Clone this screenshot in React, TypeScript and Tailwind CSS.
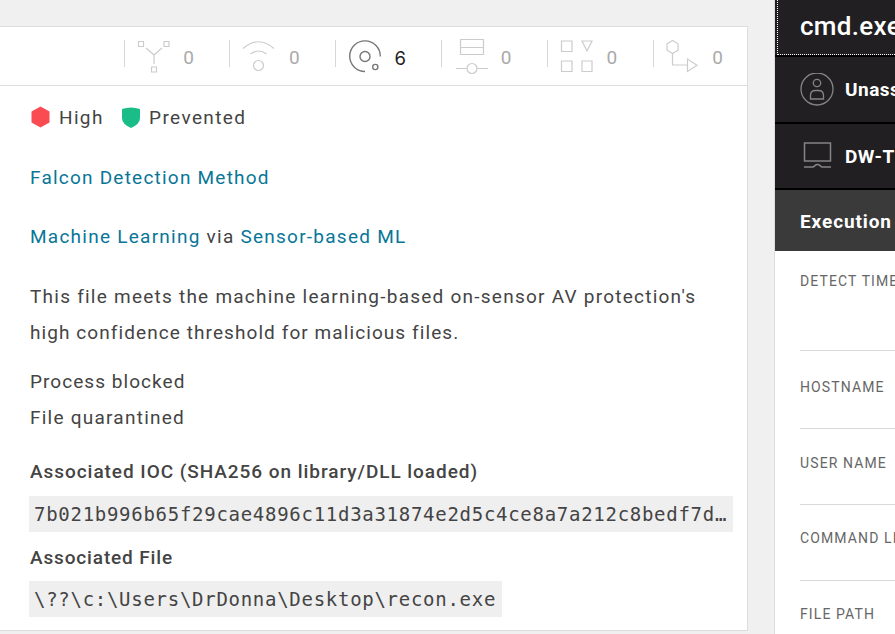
import type { ReactNode } from "react";

function Metric({ count, active, children }: { count: number; active?: boolean; children: ReactNode }) {
  return (
    <div className="flex w-[105.8px] shrink-0 items-start">
      <div className="mt-[13px] h-[27px] w-px bg-[#d6d6d6]" />
      <svg
        width="40"
        height="40"
        viewBox="0 0 40 40"
        fill="none"
        strokeWidth="1.2"
        className={`ml-[9px] mt-[9px] ${active ? "stroke-[#777777]" : "stroke-[#cccccc]"}`}
      >
        {children}
      </svg>
      <span
        className={`ml-[8px] mt-[17px] w-[14px] text-center leading-[28px] ${
          active ? "font-['Inter',sans-serif] text-[18.5px] text-[#222222]" : "text-[19px] text-[#aaaaaa]"
        }`}
      >
        {count}
      </span>
    </div>
  );
}

function Field({ label, className }: { label: string; className: string }) {
  return (
    <div className={`border-b border-[#d9d9d9] ${className}`}>
      <div className="whitespace-nowrap text-[14px] leading-[20px] tracking-[1.12px] text-[#666666]">{label}</div>
    </div>
  );
}

export default function App() {
  return (
    <div className="flex h-[634px] w-[895px] overflow-hidden bg-[#f0f0f0] font-['Roboto',sans-serif] text-[19px] text-[#444444]">
      <main className="mt-[26px] h-[605px] w-[748px] shrink-0 border-y border-r border-[#dddddd] bg-white">
        <div className="flex h-[59px] border-b border-[#dddddd] pl-[123.6px]">
          <Metric count={0}>
            <path d="M20 19V28M20 19L12 12M20 19L28 12" />
            <path d="M4.500 5.500h5v5h-5zM30 5.500h5v5h-5zM17.500 31h5v5h-5z" />
          </Metric>
          <Metric count={0}>
            <path d="M4 12.500Q19.500-1 35 12.500M11.500 18Q19.500 12 27.500 18" />
            <circle cx="19.500" cy="29.500" r="5" />
          </Metric>
          <Metric count={6} active>
            <path d="M20 35.500A15.300 15.300 0 1 1 35.300 20.500" strokeWidth="1.400" />
            <circle cx="20" cy="20.500" r="5" strokeWidth="1.400" />
            <circle cx="30.300" cy="31" r="2.600" strokeWidth="1.400" />
          </Metric>
          <Metric count={0}>
            <path d="M9.500 3.500h23v15h-23zM9.500 11.500h23M5 32.500h11M26 32.500h11" />
            <circle cx="21" cy="32.500" r="5" />
          </Metric>
          <Metric count={0}>
            <path d="M4.500 5h10.500v10.500h-10.500zM4.500 25h10.500v10.500h-10.500zM25 25h10v10.500h-10zM25 5h10l-5 10z" />
          </Metric>
          <Metric count={0}>
            <path d="M9.500 4.500l5.500 3.300v6.400l-5.500 3.300l-5.500-3.300v-6.400zM9.500 17.500v11.500h15M24.500 23v12.500l9.500-6.300z" />
          </Metric>
        </div>
        <div className="pl-[30px] leading-[36px]">
          <div className="mt-[13px] flex h-[36px] items-center">
            <svg width="21" height="22" viewBox="0 0 21 22" className="fill-[#fb4b52]">
              <path d="M10.500 .5l9 5v11l-9 5-9-5v-11z" />
            </svg>
            <span className="ml-[8px] w-[63px] pt-px tracking-[1.35px]">High</span>
            <svg width="18" height="21" viewBox="0 0 18 21" className="fill-[#1abd87]">
              <path d="M0 2Q9-1 18 2V11Q18 17 9 21Q0 17 0 11z" />
            </svg>
            <span className="ml-[9px] pt-px tracking-[1.4px]">Prevented</span>
          </div>
          <p className="mt-[25px] tracking-[1.22px] text-[#087697]">Falcon Detection Method</p>
          <p className="mt-[23px] tracking-[1.25px]">
            <span className="text-[#087697]">Machine Learning</span> via <span className="text-[#087697]">Sensor-based ML</span>
          </p>
          <p className="mt-[24px] whitespace-nowrap tracking-[1.08px]">
            <span className="tracking-[1.24px]">This file meets the machine learning-based on-sensor AV protection's</span>
            <br />
            high confidence threshold for malicious files.
          </p>
          <p className="mt-[13px] tracking-[1.05px]">
            Process blocked
            <br />
            <span className="tracking-[1.24px]">File quarantined</span>
          </p>
          <h2 className="mt-[18px] font-medium tracking-[0.95px]">Associated IOC (SHA256 on library/DLL loaded)</h2>
          <div className="-ml-px mt-[6px] h-[36px] w-[704px] overflow-hidden whitespace-nowrap bg-[#efefef] px-[5px] font-['DejaVu_Sans_Mono',monospace] text-[19px] leading-[37px] tracking-[0.72px]">
            7b021b996b65f29cae4896c11d3a31874e2d5c4ce8a7a212c8bedf7d…
          </div>
          <h2 className="mt-[8px] font-medium tracking-[0.85px]">Associated File</h2>
          <div className="-ml-px mt-[5px] h-[36px] w-[473px] whitespace-nowrap bg-[#efefef] px-[5px] font-['DejaVu_Sans_Mono',monospace] text-[19px] tracking-[0.72px]">
            {"\\??\\c:\\Users\\DrDonna\\Desktop\\recon.exe"}
          </div>
        </div>
      </main>
      <aside className="ml-[26px] w-[121px] shrink-0 overflow-hidden border-l border-[#dddddd] bg-white">
        <div className="bg-[#211f22] text-white">
          <div className="h-[57px] border-b-2 border-black pl-[2px]">
            <div className="h-[55px] border-b border-l border-dotted border-white pl-[22px] pt-[8px] text-[26px] font-medium leading-[36px] tracking-[0.3px]">
              cmd.exe
            </div>
          </div>
          <div className="flex h-[67px] items-center border-b-2 border-black pl-[25px] text-[19px] font-bold">
            <svg width="34" height="34" viewBox="0 0 34 34" fill="none" className="shrink-0 stroke-[#858585]" strokeWidth="1.300">
              <circle cx="17" cy="16" r="16" />
              <circle cx="17" cy="10" r="3.700" />
              <path d="M10.500 26v-3.500q0-5 5-5h3q5 0 5 5v3.500z" />
            </svg>
            <span className="ml-[11px] pt-[2px] tracking-[0.5px]">Unassigned</span>
          </div>
          <div className="flex h-[66px] items-center border-b-2 border-black pl-[28px] text-[19px] font-bold">
            <svg width="30" height="28" viewBox="0 0 30 28" fill="none" className="shrink-0 stroke-[#858585]" strokeWidth="1.500">
              <path d="M1.500 1h26v18h-26zM1 25h8q2 0 3-1.500q1-1 2.500-1t2.500 1q1 1.500 3 1.500h8" />
            </svg>
            <span className="ml-[12px] whitespace-nowrap pt-[2px] tracking-[0.5px]">DW-T</span>
          </div>
          <div className="h-[61px] whitespace-nowrap bg-[#3a3a3b] pl-[25px] pt-[1px] text-[19px] font-bold leading-[61px] tracking-[0.9px]">
            Execution
          </div>
        </div>
        <div className="pl-[25px]">
          <Field label="DETECT TIME" className="h-[100px] pt-[20px]" />
          <Field label="HOSTNAME" className="h-[78px] pt-[26px]" />
          <Field label="USER NAME" className="h-[76px] pt-[24px]" />
          <Field label="COMMAND LINE" className="h-[76px] pt-[23px]" />
          <Field label="FILE PATH" className="h-[76px] pt-[23px]" />
        </div>
      </aside>
    </div>
  );
}
